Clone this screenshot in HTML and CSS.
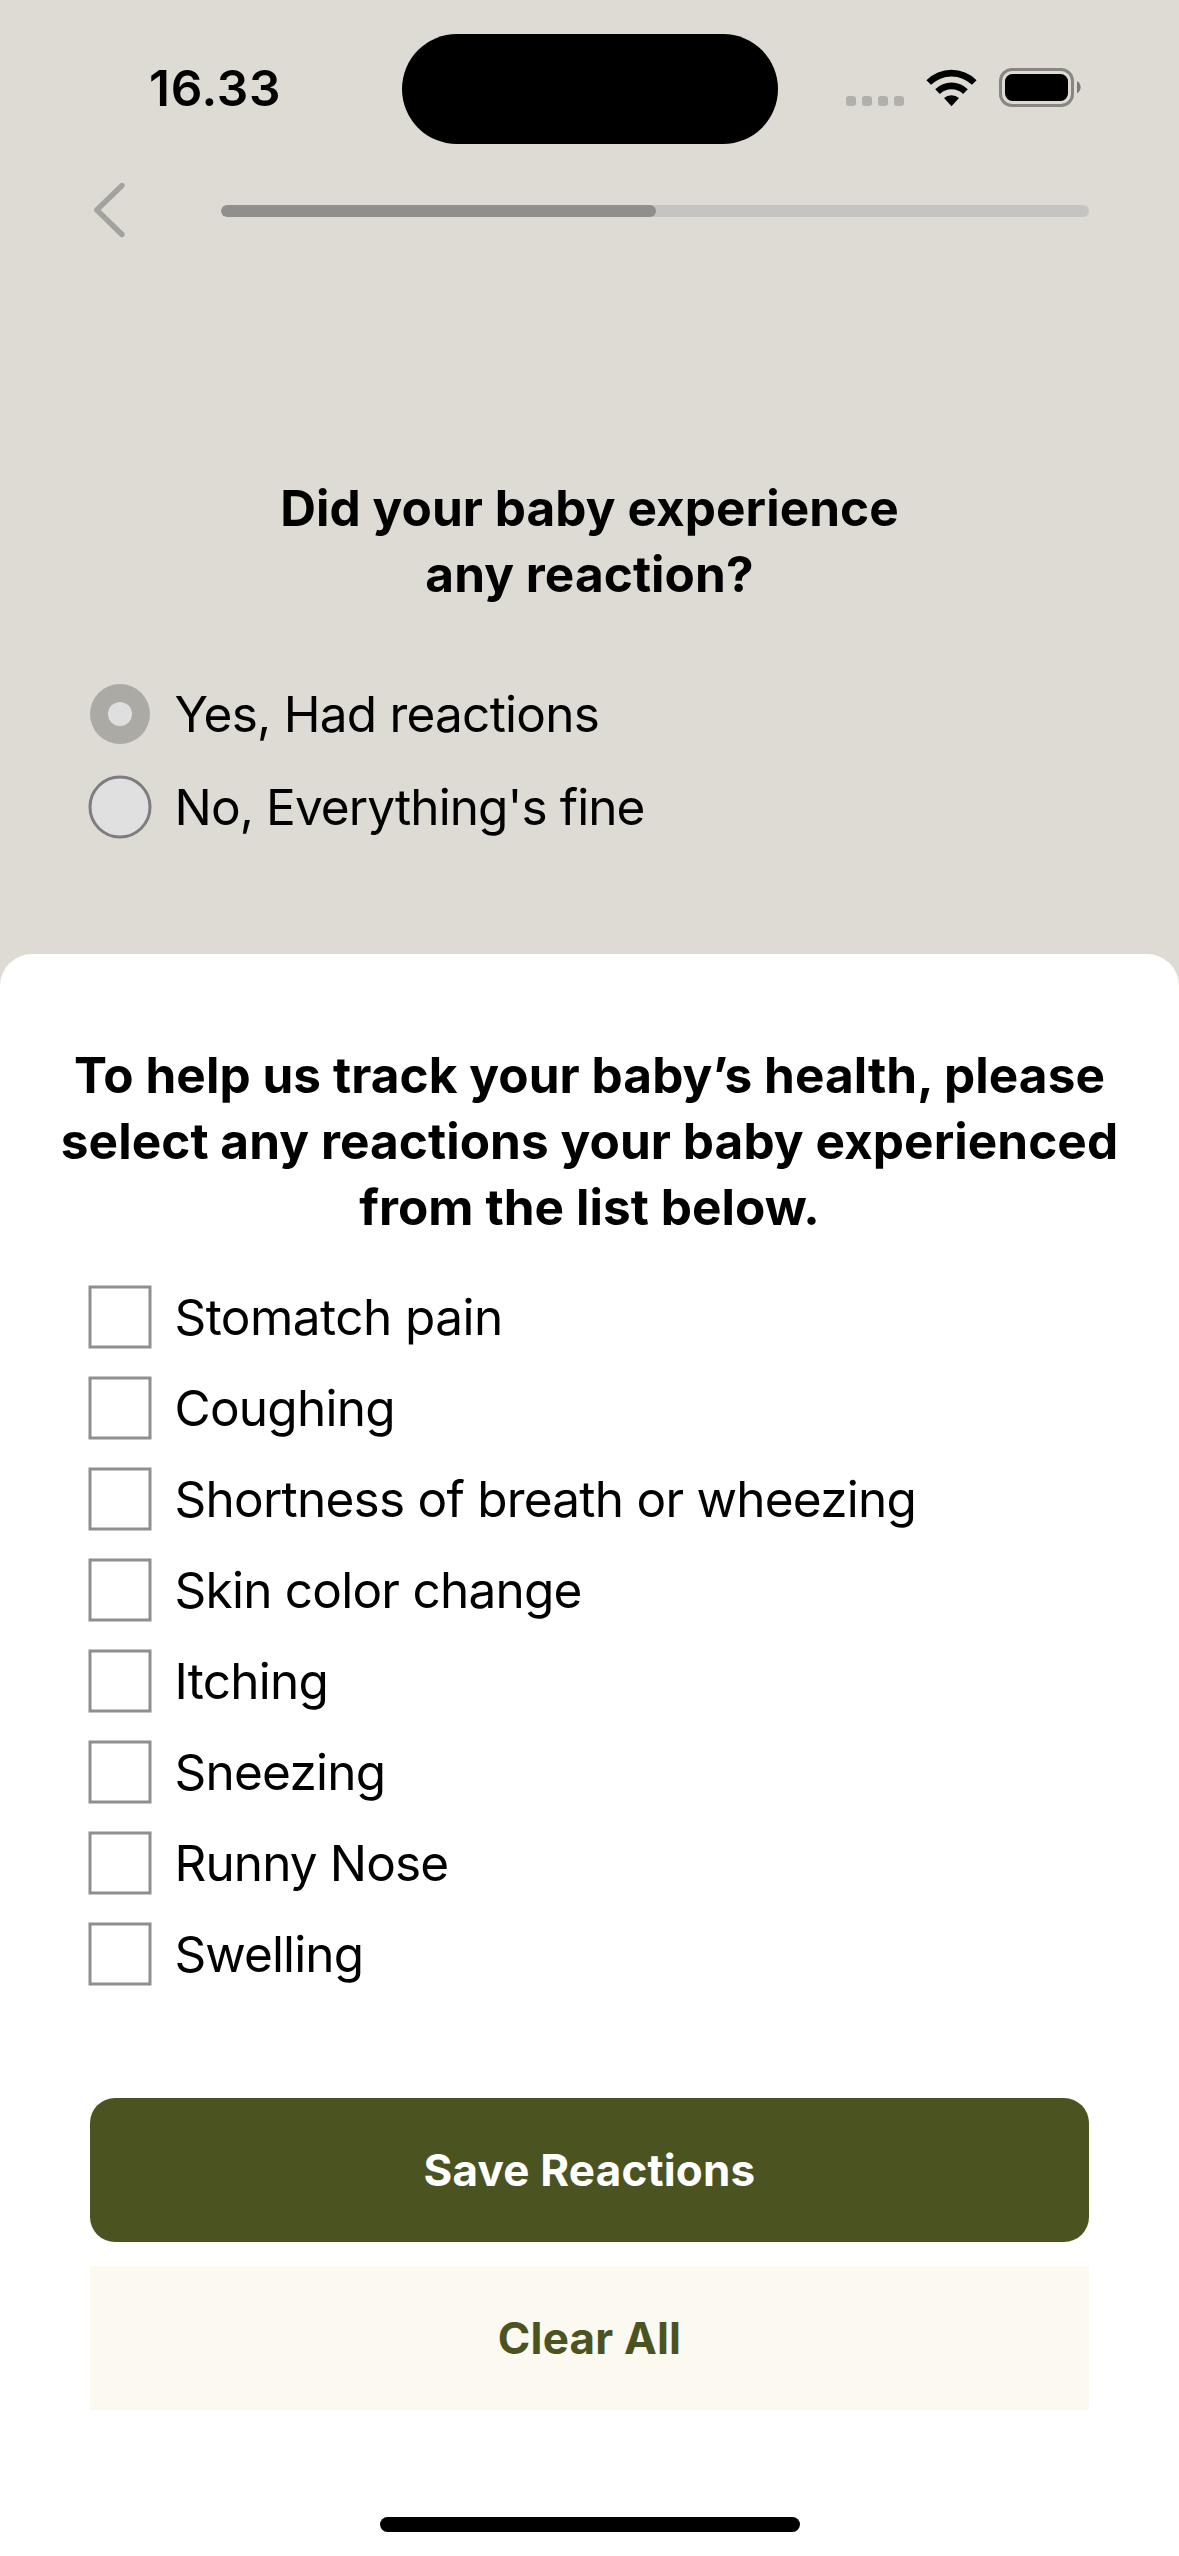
FILE: index.html
```html
<!DOCTYPE html>
<html lang="en">
<head>
<meta charset="utf-8">
<title>Baby reactions</title>
<link rel="stylesheet" href="styles.css">
</head>
<body>
<div class="screen">
  <header class="status-bar">
    <time class="clock">16.33</time>
    <div class="island"></div>
    <div class="indicators">
      <svg class="signal" width="58" height="10" viewBox="0 0 58 10" fill="#b1b0ab">
        <rect width="10" height="10" rx="3"/><rect x="16" width="10" height="10" rx="3"/><rect x="32" width="10" height="10" rx="3"/><rect x="48" width="10" height="10" rx="3"/>
      </svg>
      <svg class="wifi" width="51" height="38" viewBox="0 0 51 38">
        <path d="M0.4 11.2 A35.5 35.5 0 0 1 50.6 11.2 L46 15.8 A29.6 29.6 0 0 0 5 15.8 Z"/>
        <path d="M9.2 20.2 A23.2 23.2 0 0 1 41.8 20.2 L37.1 24.9 A17 17 0 0 0 13.9 24.9 Z"/>
        <path d="M18 29.1 A11 11 0 0 1 33 29.1 L25.5 37.2 Z"/>
      </svg>
      <svg class="battery" width="83" height="39" viewBox="0 0 83 39">
        <rect x="1.5" y="1.5" width="72" height="36" rx="11.5" fill="none" stroke="#878681" stroke-width="3"/>
        <rect x="6" y="6" width="63" height="27" rx="7.5"/>
        <path d="M78 13.3 A6.8 6.8 0 0 1 78 25.3 Z" fill="#7b7a76"/>
      </svg>
    </div>
  </header>

  <nav class="progress-row">
    <svg class="back" width="36" height="66" viewBox="0 0 36 66" fill="none" stroke="#a3a29e" stroke-width="5.4" stroke-linecap="round" stroke-linejoin="round">
      <path d="M32 7.5 L6.8 32 L32 56.5"/>
    </svg>
    <div class="track"><div class="bar"></div></div>
  </nav>

  <main class="question">
    <h1 class="heading">Did your baby experience<br>any reaction?</h1>
    <div class="answers">
      <div class="option">
        <svg class="mark" viewBox="0 0 64 64"><circle cx="32" cy="32" r="30" fill="#abaaa5"/><circle cx="32" cy="32" r="12" fill="#dfdfdf"/></svg>
        <span>Yes, Had reactions</span>
      </div>
      <div class="option">
        <svg class="mark" viewBox="0 0 64 64"><circle cx="32" cy="32" r="30" fill="#e0e0e0" stroke="#7d7d82" stroke-width="3"/></svg>
        <span class="tighter">No, Everything's fine</span>
      </div>
    </div>
  </main>

  <section class="sheet">
    <h2 class="heading">To help us track your baby’s health, please<br>select any reactions your baby experienced<br>from the list below.</h2>
    <div class="reactions">
      <div class="option"><svg class="mark" viewBox="0 0 64 64"><rect class="box" x="2" y="2" width="60" height="60"/></svg><span class="looser">Stomatch pain</span></div>
      <div class="option"><svg class="mark" viewBox="0 0 64 64"><rect class="box" x="2" y="2" width="60" height="60"/></svg><span>Coughing</span></div>
      <div class="option"><svg class="mark" viewBox="0 0 64 64"><rect class="box" x="2" y="2" width="60" height="60"/></svg><span>Shortness of breath or wheezing</span></div>
      <div class="option"><svg class="mark" viewBox="0 0 64 64"><rect class="box" x="2" y="2" width="60" height="60"/></svg><span>Skin color change</span></div>
      <div class="option"><svg class="mark" viewBox="0 0 64 64"><rect class="box" x="2" y="2" width="60" height="60"/></svg><span>Itching</span></div>
      <div class="option"><svg class="mark" viewBox="0 0 64 64"><rect class="box" x="2" y="2" width="60" height="60"/></svg><span>Sneezing</span></div>
      <div class="option"><svg class="mark" viewBox="0 0 64 64"><rect class="box" x="2" y="2" width="60" height="60"/></svg><span class="tighter">Runny Nose</span></div>
      <div class="option"><svg class="mark" viewBox="0 0 64 64"><rect class="box" x="2" y="2" width="60" height="60"/></svg><span class="tighter">Swelling</span></div>
    </div>
    <div class="actions">
      <button class="button save">Save Reactions</button>
      <button class="button clear">Clear All</button>
    </div>
    <div class="home-indicator"></div>
  </section>
</div>
</body>
</html>
```
FILE: styles.css
```css
* {
  box-sizing: border-box;
}

body {
  margin: 0;
  background: #dedbd4;
  color: #000;
  font-family: Inter, "Liberation Sans", sans-serif;
}

svg {
  display: block;
  flex: none;
}

.screen {
  display: flex;
  flex-direction: column;
  width: 1179px;
  height: 2556px;
  overflow: hidden;
}

.status-bar {
  display: grid;
  grid-template-columns: 401.5px 376px 1fr;
  height: 178px;
  padding-top: 33.5px;
}

.clock {
  padding-left: 149px;
  font-size: 49.5px;
  font-weight: 600;
  line-height: 109px;
  letter-spacing: 0.7px;
}

.island {
  height: 110.5px;
  border-radius: 56px;
  background: #000;
}

.indicators {
  display: flex;
  align-items: flex-start;
  padding: 34.5px 0 0 68.5px;
}

.signal {
  margin: 28px 22px 0 0;
}

.wifi {
  margin: 1px 22px 0 0;
}

.progress-row {
  display: flex;
  align-items: center;
  height: 66px;
  padding: 0 90px;
}

.back {
  margin-right: 95px;
}

.track {
  flex: 1;
  height: 12px;
  border-radius: 6px;
  background: #c5c4c1;
  overflow: hidden;
}

.bar {
  width: 435px;
  height: 12px;
  border-radius: 6px;
  background: #918f8d;
}

.question {
  height: 710px;
  padding-top: 231px;
}

.heading {
  margin: 0;
  font-size: 49.5px;
  font-weight: 700;
  line-height: 66px;
  letter-spacing: 0.07px;
  text-align: center;
  white-space: nowrap;
}

.answers {
  display: flex;
  flex-direction: column;
  gap: 29px;
  padding: 75px 88px 0;
}

.option {
  display: flex;
  align-items: center;
  gap: 22.5px;
  height: 64px;
  font-size: 49.5px;
  line-height: 64px;
  letter-spacing: -0.76px;
  white-space: nowrap;
}

.looser {
  letter-spacing: -0.55px;
}

.tighter {
  letter-spacing: -0.9px;
}

.mark {
  width: 64px;
  height: 64px;
}

.box {
  fill: #fff;
  stroke: #8e8e93;
  stroke-width: 3;
}

.sheet {
  flex: 1;
  display: flex;
  flex-direction: column;
  padding-top: 88px;
  border-radius: 32px 32px 0 0;
  background: #fff;
}

.reactions {
  display: flex;
  flex-direction: column;
  gap: 27px;
  padding: 45px 88px 0;
}

.actions {
  display: flex;
  flex-direction: column;
  gap: 24px;
  padding: 112px 90px 0;
}

.button {
  height: 144px;
  padding: 0;
  border: 0;
  font: 700 44px/144px Inter, "Liberation Sans", sans-serif;
  letter-spacing: 0.18px;
}

.save {
  border-radius: 25px;
  background: #4b5320;
  color: #fff;
}

.clear {
  background: #fcf9f1;
  color: #4b5320;
}

.home-indicator {
  width: 420px;
  height: 15px;
  margin: 107px auto 0;
  border-radius: 7.5px;
  background: #000;
}
```
